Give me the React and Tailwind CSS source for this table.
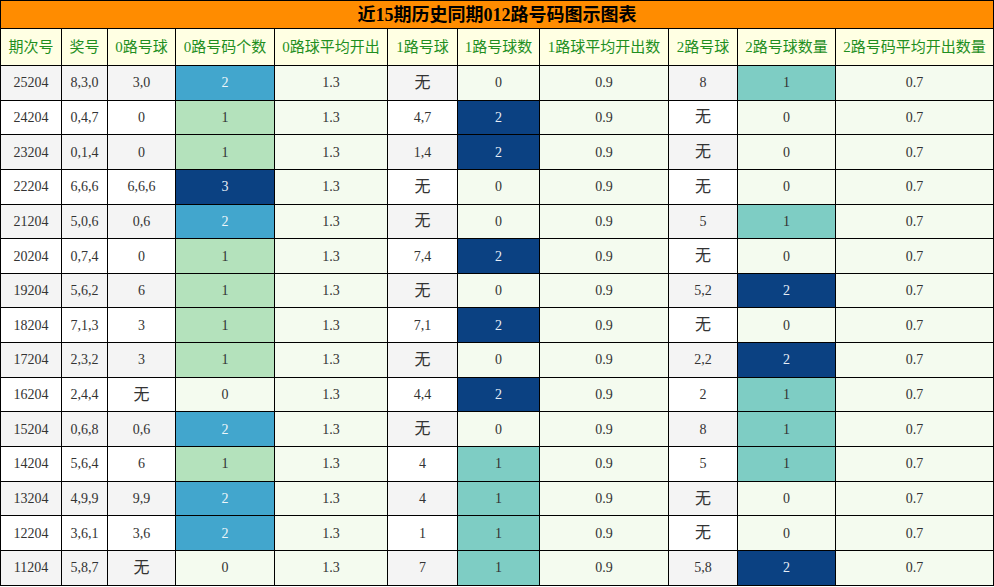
import React from 'react';

const rows = [
    ['25204', '8,3,0', '3,0', 2, '无', 0, '8', 1],
    ['24204', '0,4,7', '0', 1, '4,7', 2, '无', 0],
    ['23204', '0,1,4', '0', 1, '1,4', 2, '无', 0],
    ['22204', '6,6,6', '6,6,6', 3, '无', 0, '无', 0],
    ['21204', '5,0,6', '0,6', 2, '无', 0, '5', 1],
    ['20204', '0,7,4', '0', 1, '7,4', 2, '无', 0],
    ['19204', '5,6,2', '6', 1, '无', 0, '5,2', 2],
    ['18204', '7,1,3', '3', 1, '7,1', 2, '无', 0],
    ['17204', '2,3,2', '3', 1, '无', 0, '2,2', 2],
    ['16204', '2,4,4', '无', 0, '4,4', 2, '2', 1],
    ['15204', '0,6,8', '0,6', 2, '无', 0, '8', 1],
    ['14204', '5,6,4', '6', 1, '4', 1, '5', 1],
    ['13204', '4,9,9', '9,9', 2, '4', 1, '无', 0],
    ['12204', '3,6,1', '3,6', 2, '1', 1, '无', 0],
    ['11204', '5,8,7', '无', 0, '7', 1, '5,8', 2],
];

const headers = [
    { label: '期次号', w: 'w-[61px]' },
    { label: '奖号', w: 'w-[46px]' },
    { label: '0路号球', w: 'w-[68px]' },
    { label: '0路号码个数', w: 'w-[99px]' },
    { label: '0路球平均开出', w: 'w-[113px]' },
    { label: '1路号球', w: 'w-[70px]' },
    { label: '1路号球数', w: 'w-[82px]' },
    { label: '1路球平均开出数', w: 'w-[129px]' },
    { label: '2路号球', w: 'w-[69px]' },
    { label: '2路号球数量', w: 'w-[98px]' },
    { label: '2路号码平均开出数量', w: 'w-[158px]' },
];

// 0路 uses a 3-step scale, 1路/2路 a 2-step one
const zeroColor = {
    0: 'bg-[#f4fbef] text-[#333]',
    1: 'bg-[#b4e2bc] text-[#333]',
    2: 'bg-[#42a6cd] text-[#eef6fa]',
    3: 'bg-[#0b4182] text-[#e8eef6]',
};
const otherColor = {
    0: 'bg-[#f4fbef] text-[#333]',
    1: 'bg-[#7ecdc4] text-[#333]',
    2: 'bg-[#0b4182] text-[#e8eef6]',
};

const cell = 'border border-solid border-[#000] text-center p-0 whitespace-nowrap';

const App = () => {
    return (
        <div className="w-[994px] h-[587px] overflow-hidden bg-white font-['Liberation_Serif','Noto_Sans_CJK_SC',serif]">
            <table className="w-[994px] border-collapse table-fixed">
                <colgroup>
                    {headers.map((h) => (
                        <col key={h.label} className={h.w} />
                    ))}
                </colgroup>
                <thead>
                    <tr className="h-[28px]">
                        <th
                            colSpan={11}
                            className="border border-solid border-[#000] bg-[#ff8c00] text-[18px] font-bold text-black leading-none p-0"
                        >
                            近15期历史同期012路号码图示图表
                        </th>
                    </tr>
                    <tr className="h-[37px]">
                        {headers.map((h) => (
                            <th
                                key={h.label}
                                className={`${cell} bg-[#ffffe3] text-[#1f8f1f] text-[15px] font-normal`}
                            >
                                {h.label}
                            </th>
                        ))}
                    </tr>
                </thead>
                <tbody className="text-[14px] text-[#333]">
                    {rows.map((r, i) => {
                        const base = i % 2 === 0 ? 'bg-[#f4f4f4]' : 'bg-white';
                        return (
                            <tr key={r[0]} className="h-[34.65px]">
                                <td className={`${cell} ${base}`}>{r[0]}</td>
                                <td className={`${cell} ${base}`}>{r[1]}</td>
                                <td className={`${cell} ${base} ${r[2] === '无' ? 'text-[16px]' : ''}`}>{r[2]}</td>
                                <td className={`${cell} ${zeroColor[r[3]]}`}>{r[3]}</td>
                                <td className={`${cell} bg-[#f4fbef]`}>1.3</td>
                                <td className={`${cell} ${base} ${r[4] === '无' ? 'text-[16px]' : ''}`}>{r[4]}</td>
                                <td className={`${cell} ${otherColor[r[5]]}`}>{r[5]}</td>
                                <td className={`${cell} bg-[#f4fbef]`}>0.9</td>
                                <td className={`${cell} ${base} ${r[6] === '无' ? 'text-[16px]' : ''}`}>{r[6]}</td>
                                <td className={`${cell} ${otherColor[r[7]]}`}>{r[7]}</td>
                                <td className={`${cell} bg-[#f4fbef]`}>0.7</td>
                            </tr>
                        );
                    })}
                </tbody>
            </table>
        </div>
    );
};

export default App;
